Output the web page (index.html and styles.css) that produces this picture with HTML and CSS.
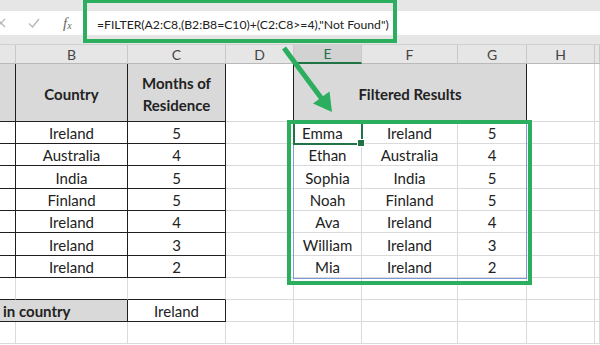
FILE: index.html
```html
<!DOCTYPE html>
<html lang="en">
<head>
    <meta charset="UTF-8">
    <title>FILTER example</title>
    <link rel="stylesheet" href="styles.css">
</head>
<body>
    <div class="window">
        <div class="top-strip"></div>

        <div class="formula-bar">
            <div class="bar-icons">
                <svg class="icon-cancel" width="10" height="10" viewBox="0 0 10 10">
                    <path d="M1 1 L9 9 M9 1 L1 9" stroke="#b8b8b8" stroke-width="1.3" fill="none"/>
                </svg>
                <svg class="icon-enter" width="12" height="10" viewBox="0 0 12 10">
                    <path d="M1 5.5 L4.5 9 L11 1" stroke="#b8b8b8" stroke-width="1.4" fill="none"/>
                </svg>
                <span class="icon-fx">f<sub>x</sub></span>
            </div>
            <div class="formula-text">=FILTER(A2:C8,(B2:B8=C10)+(C2:C8&gt;=4),"Not Found")</div>
        </div>

        <div class="bar-gap"></div>

        <div class="sheet">
            <!-- column headers -->
            <div class="col-head"></div>
            <div class="col-head">B</div>
            <div class="col-head">C</div>
            <div class="col-head">D</div>
            <div class="col-head active-col">E</div>
            <div class="col-head">F</div>
            <div class="col-head">G</div>
            <div class="col-head">H</div>
            <div class="col-head"></div>

            <!-- row 1 -->
            <div class="cell head bx mid"></div>
            <div class="cell head bx bold mid">Country</div>
            <div class="cell head bx bold mid">Months of<br>Residence</div>
            <div class="cell br"></div>
            <div class="cell head bx bold mid span3">Filtered Results</div>
            <div class="cell"></div>
            <div class="cell"></div>

            <!-- row 2 -->
            <div class="cell bx"></div>
            <div class="cell bx">Ireland</div>
            <div class="cell bx">5</div>
            <div class="cell"></div>
            <div class="cell active left">Emma</div>
            <div class="cell">Ireland</div>
            <div class="cell">5</div>
            <div class="cell"></div>
            <div class="cell"></div>

            <!-- row 3 -->
            <div class="cell bx"></div>
            <div class="cell bx">Australia</div>
            <div class="cell bx">4</div>
            <div class="cell"></div>
            <div class="cell">Ethan</div>
            <div class="cell">Australia</div>
            <div class="cell">4</div>
            <div class="cell"></div>
            <div class="cell"></div>

            <!-- row 4 -->
            <div class="cell bx"></div>
            <div class="cell bx">India</div>
            <div class="cell bx">5</div>
            <div class="cell"></div>
            <div class="cell">Sophia</div>
            <div class="cell">India</div>
            <div class="cell">5</div>
            <div class="cell"></div>
            <div class="cell"></div>

            <!-- row 5 -->
            <div class="cell bx"></div>
            <div class="cell bx">Finland</div>
            <div class="cell bx">5</div>
            <div class="cell"></div>
            <div class="cell">Noah</div>
            <div class="cell">Finland</div>
            <div class="cell">5</div>
            <div class="cell"></div>
            <div class="cell"></div>

            <!-- row 6 -->
            <div class="cell bx"></div>
            <div class="cell bx">Ireland</div>
            <div class="cell bx">4</div>
            <div class="cell"></div>
            <div class="cell">Ava</div>
            <div class="cell">Ireland</div>
            <div class="cell">4</div>
            <div class="cell"></div>
            <div class="cell"></div>

            <!-- row 7 -->
            <div class="cell bx"></div>
            <div class="cell bx">Ireland</div>
            <div class="cell bx">3</div>
            <div class="cell"></div>
            <div class="cell">William</div>
            <div class="cell">Ireland</div>
            <div class="cell">3</div>
            <div class="cell"></div>
            <div class="cell"></div>

            <!-- row 8 -->
            <div class="cell bx"></div>
            <div class="cell bx">Ireland</div>
            <div class="cell bx">2</div>
            <div class="cell"></div>
            <div class="cell">Mia</div>
            <div class="cell">Ireland</div>
            <div class="cell">2</div>
            <div class="cell"></div>
            <div class="cell"></div>

            <!-- row 9 -->
            <div class="cell bb"></div>
            <div class="cell bb"></div>
            <div class="cell bb"></div>
            <div class="cell"></div>
            <div class="cell"></div>
            <div class="cell"></div>
            <div class="cell"></div>
            <div class="cell"></div>
            <div class="cell"></div>

            <!-- row 10 -->
            <div class="cell head bx bold left span2">in country</div>
            <div class="cell bx">Ireland</div>
            <div class="cell"></div>
            <div class="cell"></div>
            <div class="cell"></div>
            <div class="cell"></div>
            <div class="cell"></div>
            <div class="cell"></div>

            <!-- row 11 -->
            <div class="cell"></div>
            <div class="cell"></div>
            <div class="cell"></div>
            <div class="cell"></div>
            <div class="cell"></div>
            <div class="cell"></div>
            <div class="cell"></div>
            <div class="cell"></div>
            <div class="cell"></div>
        </div>

        <!-- annotations drawn over the sheet -->
        <div class="formula-mark"></div>
        <div class="spill-border"></div>
        <div class="result-mark"></div>
        <svg class="arrow" width="600" height="345" viewBox="0 0 600 345">
            <line x1="284" y1="48" x2="322" y2="99" stroke="#2bae5e" stroke-width="5"/>
            <polygon points="332,112 313,103.5 329.5,91.5" fill="#2bae5e"/>
        </svg>
    </div>
</body>
</html>
```

FILE: styles.css
```css
* {
    margin: 0;
    padding: 0;
    box-sizing: border-box;
}

body {
    font-family: Lato, "Open Sans", sans-serif;
    background-color: #fff;
    color: #222;
    overflow: hidden;
}

.window {
    position: relative;
    width: 600px;
    height: 345px;
    overflow: hidden;
}

.top-strip {
    height: 11px;
    background-color: #e6e6e6;
}

.formula-bar {
    height: 24px;
    display: flex;
    align-items: center;
    background-color: #fff;
}

.bar-icons {
    width: 97px;
    height: 100%;
    display: flex;
    align-items: center;
}

.icon-cancel {
    margin-left: -4px;
}

.icon-enter {
    margin-left: 22px;
}

.icon-fx {
    margin-left: 23px;
    font-family: "Liberation Serif", serif;
    font-style: italic;
    font-size: 15px;
    color: #666;
    line-height: 1;
}

.icon-fx sub {
    font-size: 10px;
    vertical-align: -1px;
}

.formula-text {
    font-size: 12.2px;
    color: #222;
    white-space: nowrap;
    padding-top: 2px;
}

.bar-gap {
    height: 10px;
    background-color: #e6e6e6;
    border-bottom: 1px solid #cfcfcf;
}

.sheet {
    display: grid;
    grid-template-columns: 16px 112px 98px 68px 68px 96px 69px 68px 5px;
    grid-template-rows: 19px 58px 22px 22px 23px 22px 22px 23px 22px 22px 22px 22px;
}

.col-head {
    background-color: #e6e6e6;
    border-right: 1px solid #c9c9c9;
    border-bottom: 1px solid #b9b9b9;
    color: #444;
    font-size: 14px;
    display: flex;
    align-items: center;
    justify-content: center;
}

.active-col {
    background-color: #d2d2d2;
    color: #217346;
    border-bottom: 2px solid #217346;
}

.cell {
    border-right: 1px solid #dadada;
    border-bottom: 1px solid #dadada;
    font-size: 15px;
    line-height: 18px;
    display: flex;
    align-items: flex-end;
    justify-content: center;
    text-align: center;
    padding-bottom: 1px;
    white-space: nowrap;
}

.cell.head {
    background-color: #d9d9d9;
}

.cell.bold {
    font-weight: bold;
}

.cell.mid {
    align-items: center;
    line-height: 22px;
    padding-bottom: 0;
    padding-top: 2px;
}

.cell.left {
    justify-content: flex-start;
    padding-left: 8px;
}

.span2 {
    grid-column: span 2;
}

.span3 {
    grid-column: span 3;
}

.bx {
    border-right-color: #1f1f1f;
    border-bottom-color: #1f1f1f;
}

.br {
    border-right-color: #1f1f1f;
}

.bb {
    border-bottom-color: #1f1f1f;
}

.cell.head.left {
    padding-left: 3px;
}

.cell.active {
    position: relative;
    outline: 2px solid #217346;
    outline-offset: -1px;
    z-index: 2;
}

.cell.active::after {
    content: "";
    position: absolute;
    right: -4px;
    bottom: -4px;
    width: 6px;
    height: 6px;
    background-color: #217346;
    border: 1px solid #fff;
}

.formula-mark {
    position: absolute;
    left: 83px;
    top: -1px;
    width: 314px;
    height: 44px;
    border: 4px solid #2bae5e;
}

.spill-border {
    position: absolute;
    left: 293px;
    top: 123px;
    width: 234px;
    height: 156px;
    border: 1px solid #7d9ad8;
}

.result-mark {
    position: absolute;
    left: 287px;
    top: 120px;
    width: 245px;
    height: 165px;
    border: 4px solid #2bae5e;
    z-index: 3;
}

.arrow {
    position: absolute;
    left: 0;
    top: 0;
    z-index: 3;
}
```
